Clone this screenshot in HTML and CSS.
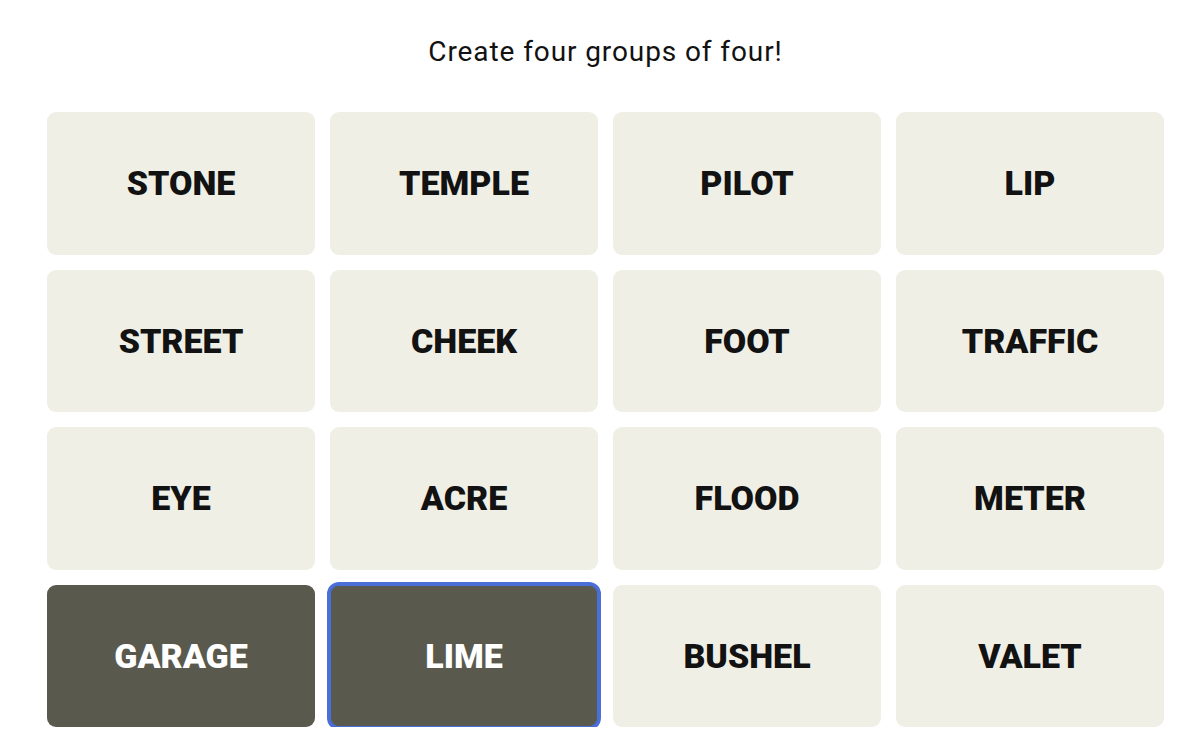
FILE: index.html
```html
<!DOCTYPE html>
<html lang="en">
<head>
<meta charset="utf-8">
<title>Connections</title>
<link rel="stylesheet" href="styles.css">
</head>
<body>
<main class="game">
  <h1 class="prompt">Create four groups of four!</h1>
  <div class="board">
    <button class="tile">STONE</button>
    <button class="tile">TEMPLE</button>
    <button class="tile">PILOT</button>
    <button class="tile">LIP</button>
    <button class="tile">STREET</button>
    <button class="tile">CHEEK</button>
    <button class="tile">FOOT</button>
    <button class="tile">TRAFFIC</button>
    <button class="tile">EYE</button>
    <button class="tile">ACRE</button>
    <button class="tile">FLOOD</button>
    <button class="tile">METER</button>
    <button class="tile selected">GARAGE</button>
    <button class="tile selected focused">LIME</button>
    <button class="tile">BUSHEL</button>
    <button class="tile">VALET</button>
  </div>
</main>
</body>
</html>
```
FILE: styles.css
```css
html, body {
  margin: 0;
  padding: 0;
  background: #ffffff;
}
body {
  font-family: Roboto, "Liberation Sans", Arial, sans-serif;
  color: #121212;
}
.game {
  width: 1117px;
  margin: 0 0 0 47px;
  padding-top: 34px;
}
.prompt {
  margin: 0;
  height: 36px;
  line-height: 36px;
  font-size: 28px;
  font-weight: 400;
  text-align: center;
  letter-spacing: 0.9px;
}
.board {
  margin-top: 42px;
  display: grid;
  grid-template-columns: repeat(4, 268px);
  grid-auto-rows: 142.5px;
  column-gap: 15px;
  row-gap: 15px;
}
.tile {
  border: none;
  border-radius: 9px;
  background: #efefe6;
  color: #121212;
  font-family: Roboto, "Liberation Sans", Arial, sans-serif;
  font-weight: 900;
  font-size: 34px;
  padding: 0;
  margin: 0;
  display: flex;
  align-items: center;
  justify-content: center;
  cursor: pointer;
}
.tile.selected {
  background: #5a594e;
  color: #ffffff;
}
.tile.focused {
  box-shadow: 0 0 0 3px #4a6fd8, inset 0 0 0 1px #4a6fd8;
}
```
